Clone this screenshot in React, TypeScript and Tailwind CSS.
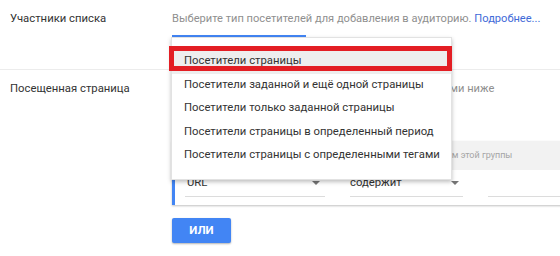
import React from "react";

const Arrow = () => (
  <svg width="8" height="4" viewBox="0 0 8 4" className="shrink-0">
    <path d="M0 0 L8 0 L4 4 Z" fill="#757575" />
  </svg>
);

const items = [
  "Посетители страницы",
  "Посетители заданной и ещё одной страницы",
  "Посетители только заданной страницы",
  "Посетители страницы в определенный период",
  "Посетители страницы с определенными тегами",
];

export default function App() {
  return (
    <div
      className="relative w-[560px] h-[256px] overflow-hidden bg-white"
      style={{ fontFamily: "Roboto, 'Noto Sans', sans-serif" }}
    >
      {/* Row 1 */}
      <div className="flex h-[70px] border-b border-[#ececec] pt-[11px]">
        <div className="w-[172px] shrink-0 pl-[10px] text-[11.3px] leading-[15px] text-[#333]">
          Участники списка
        </div>
        <div className="flex flex-col">
          <div className="whitespace-nowrap text-[11.1px] leading-[15px] text-[#8f8f8f]">
            Выберите тип посетителей для добавления в аудиторию.{" "}
            <span className="text-[#3f6ad8]">Подробнее...</span>
          </div>
          <div className="mt-[9px] h-[2px] w-[134px] bg-[#4285f4]" />
        </div>
      </div>

      {/* Row 2 */}
      <div className="flex pt-[11px]">
        <div className="w-[172px] shrink-0 pl-[10px] text-[11.3px] leading-[15px] text-[#333]">
          Посещенная страница
        </div>
        <div className="flex flex-col">
          <div className="whitespace-nowrap text-[11.1px] leading-[15px] text-[#8f8f8f]">
            Выберите страницы в соответствии с этими правилами ниже
          </div>
          <div className="mt-[45px] w-[420px] border-l-[3px] border-[#4285f4] bg-white shadow-[0_1px_2px_rgba(0,0,0,0.25)]">
            <div className="flex h-[29px] items-center bg-[#f2f2f2] pl-[10px] whitespace-nowrap text-[9px] text-[#a5a5a5]">
              Посетители должны соответствовать всем заданным условиям этой группы
            </div>
            <div className="flex h-[35px] items-start pl-[10px]">
              <div className="flex h-[27px] w-[140px] items-center justify-between border-b border-[#dcdcdc] pl-[2px] pr-[5px] text-[11.3px] text-[#333]">
                <span>URL</span>
                <Arrow />
              </div>
              <div className="ml-[25px] flex h-[27px] w-[113px] items-center justify-between border-b border-[#dcdcdc] pr-[4px] text-[11.3px] text-[#333]">
                <span>содержит</span>
                <Arrow />
              </div>
              <div className="ml-[25px] h-[27px] flex-1 border-b border-[#dcdcdc]" />
            </div>
          </div>
          <button className="mt-[13px] flex h-[25px] w-[59px] items-center justify-center rounded-[2px] bg-[#4285f4] text-[11.5px] font-bold text-white shadow-[0_1px_2px_rgba(0,0,0,0.3)]">
            ИЛИ
          </button>
        </div>
      </div>

      {/* Dropdown menu */}
      <div className="absolute left-[171px] top-[37px] h-[143px] w-[281px] border border-[#e2e2e2] bg-white pt-[12px] shadow-[0_2px_4px_rgba(0,0,0,0.25)]">
        {items.map((t, i) => (
          <div
            key={t}
            className={`flex h-[23.5px] items-center whitespace-nowrap pl-[12px] text-[11.3px] text-[#333] ${
              i === 0 ? "bg-[#eeeeee]" : ""
            }`}
          >
            {t}
          </div>
        ))}
      </div>

      {/* Red annotation box */}
      <div className="absolute left-[169px] top-[46px] h-[25px] w-[283px] border-[5px] border-[#e31e24]" />
    </div>
  );
}
